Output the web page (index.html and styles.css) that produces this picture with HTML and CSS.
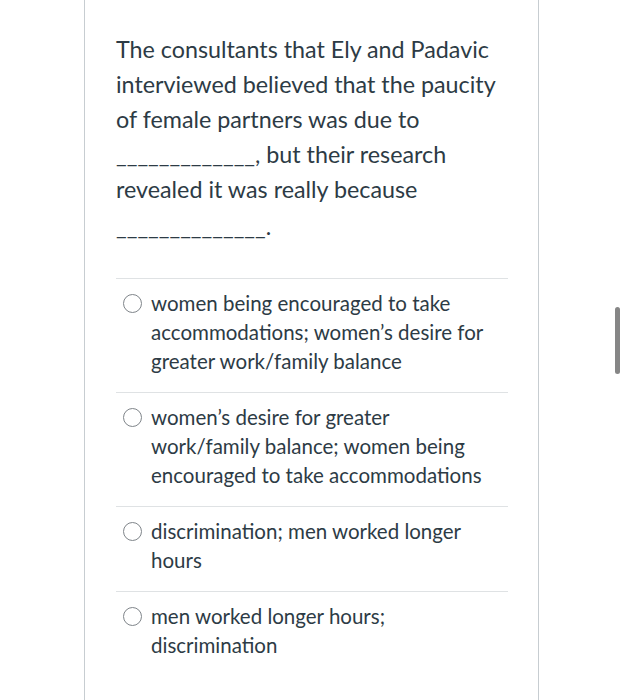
FILE: index.html
```html
<!DOCTYPE html>
<html>
<head>
<meta charset="utf-8">
<link rel="stylesheet" href="styles.css">
</head>
<body>
<div class="card">
  <div class="question">
    <p class="q-text">The consultants that Ely and Padavic interviewed believed that the paucity of female partners was due to _____________, but their research revealed it was really because</p>
    <p class="q-blank">______________.</p>
  </div>
  <ul class="options">
    <li class="option"><span class="radio"></span><span class="label">women being encouraged to take accommodations; women’s desire for greater work/family balance</span></li>
    <li class="option"><span class="radio"></span><span class="label">women’s desire for greater work/family balance; women being encouraged to take accommodations</span></li>
    <li class="option"><span class="radio"></span><span class="label">discrimination; men worked longer hours</span></li>
    <li class="option"><span class="radio"></span><span class="label">men worked longer hours; discrimination</span></li>
  </ul>
</div>
<div class="scrollbar"></div>
</body>
</html>
```
FILE: styles.css
```css
html, body {
  margin: 0;
  padding: 0;
  background: #ffffff;
  height: 100%;
  overflow: hidden;
}
body {
  font-family: Lato, "Open Sans", sans-serif;
  color: #2d3b45;
}
.card {
  margin-left: 84px;
  width: 392px;
  min-height: 720px;
  border-left: 1px solid #c7cdd1;
  border-right: 1px solid #c7cdd1;
  padding: 32px 30px 0 31px;
  box-sizing: content-box;
}
.question {
  font-size: 23.3px;
  line-height: 35px;
}
.q-text {
  margin: 0;
}
.q-blank {
  margin: 2px 0 0 0;
}
.options {
  list-style: none;
  margin: 34px 0 0 0;
  padding: 0;
}
.option {
  display: flex;
  align-items: flex-start;
  border-top: 1px solid #dfe2e4;
  padding: 10px 12px 16px 0;
  font-size: 20.5px;
  line-height: 29px;
}
.radio {
  flex: none;
  width: 17px;
  height: 17px;
  border: 1.5px solid #7f858a;
  border-radius: 50%;
  margin: 5px 9px 0 7px;
}
.label {
  flex: 1;
}
.scrollbar {
  position: absolute;
  left: 615px;
  top: 307px;
  width: 5px;
  height: 67px;
  border-radius: 3px;
  background: #868686;
}
```
